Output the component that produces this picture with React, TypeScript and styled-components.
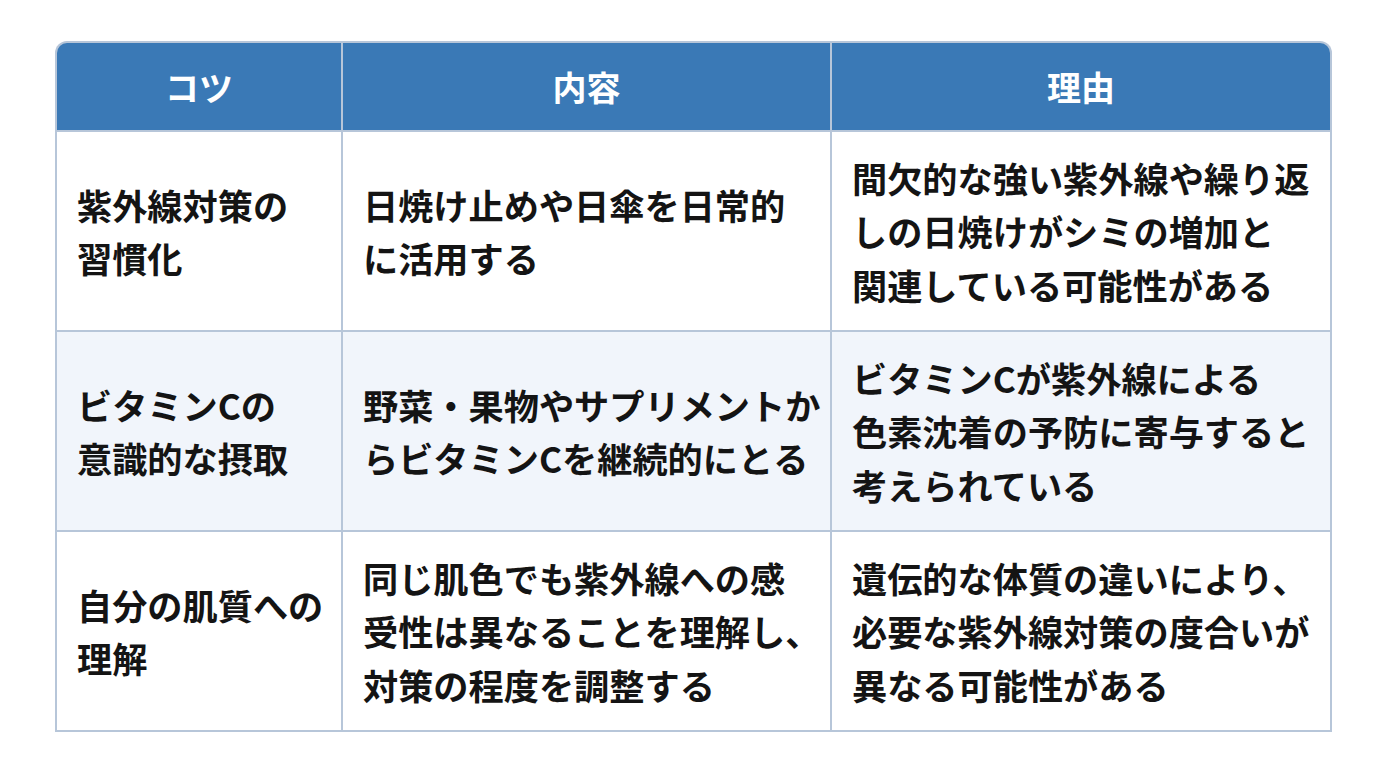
import * as React from 'react'
import styled, { createGlobalStyle } from 'styled-components'

const GlobalStyle = createGlobalStyle`
  html, body {
    margin: 0;
    padding: 0;
    background: #ffffff;
  }
  body {
    font-family: 'Noto Sans CJK JP', 'Noto Sans', sans-serif;
  }
`

const Page = styled.div`
  padding: 41px 0 0 55px;
  width: 1376px;
  height: 768px;
  box-sizing: border-box;
`

const Grid = styled.div`
  display: grid;
  grid-template-columns: 284px 487px 498px;
  grid-template-rows: 87px 198px 198px 198px;
  gap: 2px;
  padding: 2px;
  width: 1277px;
  box-sizing: border-box;
  background: #b7c6d9;
  border-radius: 12px 12px 0 0;
`

const HeadCell = styled.div<{ $pos?: 'first' | 'last' }>`
  display: flex;
  align-items: center;
  justify-content: center;
  background: #3a79b6;
  color: #ffffff;
  font-size: 34px;
  font-weight: 700;
  border-radius: ${(p) =>
    p.$pos === 'first' ? '10px 0 0 0' : p.$pos === 'last' ? '0 10px 0 0' : '0'};
`

const Cell = styled.div<{ $alt?: boolean }>`
  display: flex;
  align-items: center;
  padding: 0 0 0 20px;
  background: ${(p) => (p.$alt ? '#f1f5fb' : '#ffffff')};
  color: #141414;
  font-size: 35.2px;
  font-weight: 700;
  line-height: 53.5px;
  white-space: nowrap;
  overflow: hidden;
`

const rows: string[][][] = [
  [
    ['紫外線対策の', '習慣化'],
    ['日焼け止めや日傘を日常的', 'に活用する'],
    ['間欠的な強い紫外線や繰り返', 'しの日焼けがシミの増加と', '関連している可能性がある'],
  ],
  [
    ['ビタミンCの', '意識的な摂取'],
    ['野菜・果物やサプリメントか', 'らビタミンCを継続的にとる'],
    ['ビタミンCが紫外線による', '色素沈着の予防に寄与すると', '考えられている'],
  ],
  [
    ['自分の肌質への', '理解'],
    ['同じ肌色でも紫外線への感', '受性は異なることを理解し、', '対策の程度を調整する'],
    ['遺伝的な体質の違いにより、', '必要な紫外線対策の度合いが', '異なる可能性がある'],
  ],
]

const App: React.FC = () => {
  return (
    <Page>
      <GlobalStyle />
      <Grid>
        <HeadCell $pos="first">コツ</HeadCell>
        <HeadCell>内容</HeadCell>
        <HeadCell $pos="last">理由</HeadCell>
        {rows.map((row, i) =>
          row.map((lines, j) => (
            <Cell key={`${i}-${j}`} $alt={i % 2 === 1}>
              <div>
                {lines.map((l, k) => (
                  <React.Fragment key={k}>
                    {l}
                    {k < lines.length - 1 && <br />}
                  </React.Fragment>
                ))}
              </div>
            </Cell>
          ))
        )}
      </Grid>
    </Page>
  )
}

export default App
